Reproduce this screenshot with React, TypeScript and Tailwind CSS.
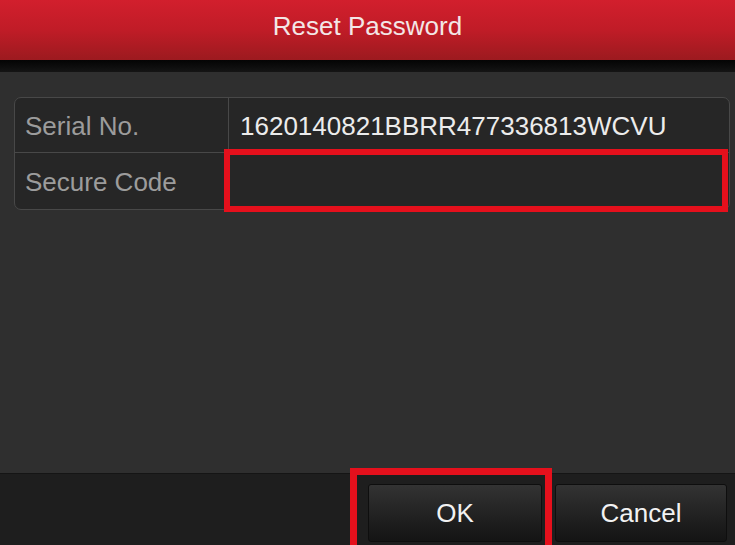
export default function App() {
  const font = { fontFamily: '"Liberation Sans", Arial, sans-serif' };

  return (
    <div className="flex h-[545px] w-[735px] flex-col overflow-hidden bg-[#2f2f2f]" style={font}>
      {/* title bar */}
      <div className="flex h-[60px] items-center justify-center bg-gradient-to-b from-[#d21f2d] via-[#c01c27] to-[#9c1a1f] pb-[8px]">
        <span className="text-[26px] leading-none text-[#f3e6e6]">Reset Password</span>
      </div>
      <div className="h-[12px] bg-gradient-to-b from-[#050505] to-[#151515]" />

      {/* body */}
      <div className="flex-1 pl-[14px] pr-[5px] pt-[25px]">
        <div className="overflow-visible rounded-[7px] border border-[#484848] bg-[#262626]">
          <div className="flex h-[55px] border-b border-[#484848]">
            <div className="flex w-[214px] items-center border-r border-[#484848] pl-[10px] pt-[2px] text-[26px] text-[#9c9c9c]">
              Serial No.
            </div>
            <div className="flex flex-1 items-center pl-[11px] pt-[2px] text-[26px] text-[#ececec]">
              1620140821BBRR477336813WCVU
            </div>
          </div>
          <div className="flex h-[56px]">
            <div className="flex w-[214px] items-center border-r border-[#484848] pl-[10px] pt-[2px] text-[26px] text-[#9c9c9c]">
              Secure Code
            </div>
            <div className="relative flex-1">
              <div className="absolute -bottom-[3px] -left-[5px] -top-[4px] right-[1px] border-[6px] border-[#e5101c]" />
            </div>
          </div>
        </div>
      </div>

      {/* footer */}
      <div className="flex h-[72px] justify-end gap-[13px] border-t border-[#151515] bg-[#1e1e1e] pr-[8px] pt-[10px]">
        <div className="relative">
          <button className="flex h-[58px] w-[174px] items-center justify-center rounded-[3px] border border-[#0e0e0e] bg-gradient-to-b from-[#333333] to-[#141414] text-[26px] text-[#f2f2f2]">
            OK
          </button>
          <div className="absolute -bottom-[20px] -left-[18px] -right-[10px] -top-[16px] border-[7px] border-[#e5101c]" />
        </div>
        <button className="flex h-[58px] w-[172px] items-center justify-center rounded-[3px] border border-[#0e0e0e] bg-gradient-to-b from-[#333333] to-[#141414] text-[26px] text-[#f2f2f2]">
          Cancel
        </button>
      </div>
    </div>
  );
}
